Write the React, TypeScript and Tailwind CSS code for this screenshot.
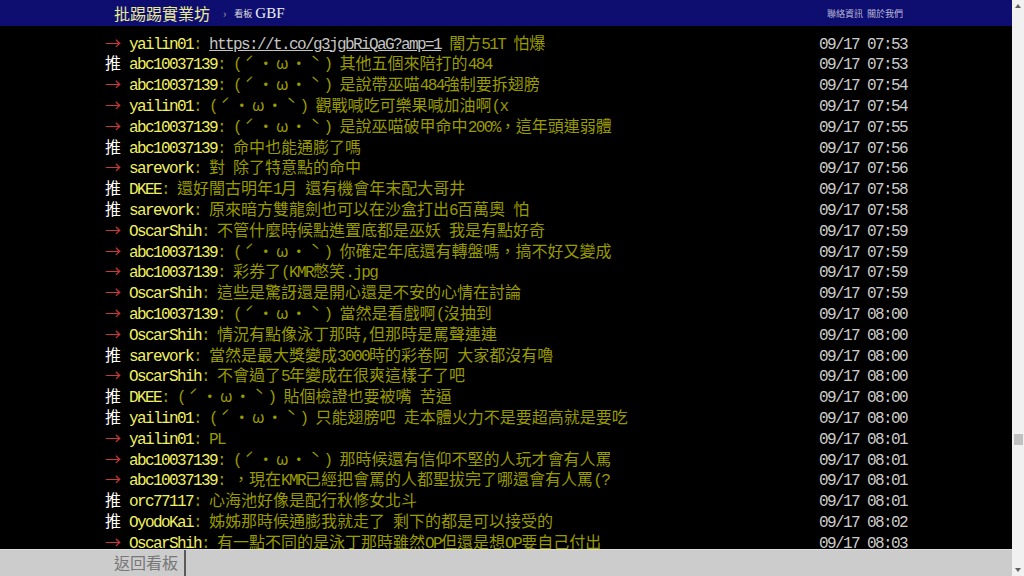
import React from 'react';

type Push = { tag: '推' | '→'; user: string; text: string; time: string; link?: string; face?: boolean };

const pushes: Push[] = [
  { tag: '→', user: 'yailin01', link: 'https://t.co/g3jgbRiQaG?amp=1', text: ' 闇方51T 怕爆', time: '09/17 07:53' },
  { tag: '推', user: 'abc10037139', face: true, text: '其他五個來陪打的484', time: '09/17 07:53' },
  { tag: '→', user: 'abc10037139', face: true, text: '是說帶巫喵484強制要拆翅膀', time: '09/17 07:54' },
  { tag: '→', user: 'yailin01', face: true, text: '觀戰喊吃可樂果喊加油啊(x', time: '09/17 07:54' },
  { tag: '→', user: 'abc10037139', face: true, text: '是說巫喵破甲命中200%，這年頭連弱體', time: '09/17 07:55' },
  { tag: '推', user: 'abc10037139', text: '命中也能通膨了嗎', time: '09/17 07:56' },
  { tag: '→', user: 'sarevork', text: '對 除了特意點的命中', time: '09/17 07:56' },
  { tag: '推', user: 'DKEE', text: '還好闇古明年1月 還有機會年末配大哥井', time: '09/17 07:58' },
  { tag: '推', user: 'sarevork', text: '原來暗方雙龍劍也可以在沙盒打出6百萬奧 怕', time: '09/17 07:58' },
  { tag: '→', user: 'OscarShih', text: '不管什麼時候點進置底都是巫妖 我是有點好奇', time: '09/17 07:59' },
  { tag: '→', user: 'abc10037139', face: true, text: '你確定年底還有轉盤嗎，搞不好又變成', time: '09/17 07:59' },
  { tag: '→', user: 'abc10037139', text: '彩券了(KMR憋笑.jpg', time: '09/17 07:59' },
  { tag: '→', user: 'OscarShih', text: '這些是驚訝還是開心還是不安的心情在討論', time: '09/17 07:59' },
  { tag: '→', user: 'abc10037139', face: true, text: '當然是看戲啊(沒抽到', time: '09/17 08:00' },
  { tag: '→', user: 'OscarShih', text: '情況有點像泳丁那時,但那時是罵聲連連', time: '09/17 08:00' },
  { tag: '推', user: 'sarevork', text: '當然是最大獎變成3000時的彩卷阿 大家都沒有嚕', time: '09/17 08:00' },
  { tag: '→', user: 'OscarShih', text: '不會過了5年變成在很爽這樣子了吧', time: '09/17 08:00' },
  { tag: '推', user: 'DKEE', face: true, text: '貼個檢證也要被嘴 苦逼', time: '09/17 08:00' },
  { tag: '推', user: 'yailin01', face: true, text: '只能翅膀吧 走本體火力不是要超高就是要吃', time: '09/17 08:00' },
  { tag: '→', user: 'yailin01', text: 'PL', time: '09/17 08:01' },
  { tag: '→', user: 'abc10037139', face: true, text: '那時候還有信仰不堅的人玩才會有人罵', time: '09/17 08:01' },
  { tag: '→', user: 'abc10037139', text: '，現在KMR已經把會罵的人都聖拔完了哪還會有人罵(?', time: '09/17 08:01' },
  { tag: '推', user: 'orc77117', text: '心海池好像是配行秋修女北斗', time: '09/17 08:01' },
  { tag: '推', user: 'OyodoKai', text: '姊姊那時候通膨我就走了 剩下的都是可以接受的', time: '09/17 08:02' },
  { tag: '→', user: 'OscarShih', text: '有一點不同的是泳丁那時雖然OP但還是想OP要自己付出', time: '09/17 08:03' },
];

// half-width runs go in a mono face squeezed to 8px a cell, like the bbs screen
function Txt({ s }: { s: string }) {
  const parts = s.match(/[\x00-\x7f]+|[^\x00-\x7f]+/g) ?? [];
  return (
    <>
      {parts.map((p, i) =>
        /^[\x00-\x7f]/.test(p) ? (
          <span key={i} className="font-['Liberation_Mono',monospace] tracking-[-1.6px]">
            {p}
          </span>
        ) : (
          <span key={i}>{p}</span>
        )
      )}
    </>
  );
}

function Face() {
  return (
    <>
      <Txt s="(" />
      {['ˊ', '・', 'ω', '・', 'ˋ'].map((c, i) => (
        <span key={i} className="inline-block w-[16.5px] text-center">
          {c}
        </span>
      ))}
      <Txt s=") " />
    </>
  );
}

function PushRow({ p }: { p: Push }) {
  return (
    <div className="flex h-[20.8px] justify-between whitespace-pre">
      <div>
        <span className={p.tag === '推' ? 'text-white' : 'text-[#c83a3a]'}>
          <Txt s={p.tag + ' '} />
        </span>
        <span className="text-[#f0f060]">
          <Txt s={p.user} />
        </span>
        <span className="text-[#999900]">
          <Txt s=": " />
          {p.link && (
            <span className="text-[#c4c4c4] underline">
              <Txt s={p.link} />
            </span>
          )}
          {p.face && <Face />}
          <Txt s={p.text} />
        </span>
      </div>
      <span className="text-[#cccccc]">
        <Txt s={' ' + p.time} />
      </span>
    </div>
  );
}

export default function App() {
  return (
    <div className="flex h-[576px] w-[1024px] overflow-hidden bg-black font-['Noto_Sans_CJK_TC',sans-serif] text-[16px] leading-[20.8px]">
      <div className="flex w-[1012px] flex-col">
        <div className="h-[26px] shrink-0 bg-[#0e0e70]">
          <div className="mx-auto flex h-full w-[802px] items-center justify-between pl-[9px] pr-[4px]">
            <div className="flex items-center">
              <span className="text-[16px] leading-none text-[#eaea95]">批踢踢實業坊</span>
              <span className="ml-[13px] text-[11px] leading-none text-[#aaaaaa]">›</span>
              <span className="ml-[8px] text-[9px] leading-none text-[#dddddd]">看板</span>
              <span className="ml-[3px] font-['Liberation_Serif',serif] text-[15px] leading-none text-[#eeeeee]">GBF</span>
            </div>
            <div className="flex gap-[4px] text-[9px] leading-none text-[#b8b8d8]">
              <span>聯絡資訊</span>
              <span>關於我們</span>
            </div>
          </div>
        </div>

        <div className="min-h-0 flex-1 overflow-hidden pt-[5.6px]">
          <div className="mx-auto w-[802px]">
            {pushes.map((p, i) => (
              <PushRow key={i} p={p} />
            ))}
          </div>
        </div>

        <div className="h-[27px] shrink-0 border-t border-[#dddddd] bg-[#cccccc]">
          <div className="mx-auto flex h-full w-[802px]">
            <div className="flex items-center border-r-2 border-[#5a5a5a] pb-[2px] pl-[9px] pr-[6px] text-[16px] text-[#777777]">
              返回看板
            </div>
          </div>
        </div>
      </div>

      <div className="flex w-[12px] flex-col bg-[#f1f1f1]">
        <div className="flex h-[12px] items-center justify-center">
          <svg width="6" height="4" viewBox="0 0 6 4">
            <path d="M3 0 L6 4 L0 4 Z" fill="#606060" />
          </svg>
        </div>
        <div className="mx-auto mt-[422px] h-[11px] w-[9px] bg-[#c1c1c1]" />
        <div className="flex-1" />
        <div className="flex h-[12px] items-center justify-center">
          <svg width="6" height="4" viewBox="0 0 6 4">
            <path d="M0 0 L6 0 L3 4 Z" fill="#606060" />
          </svg>
        </div>
      </div>
    </div>
  );
}
